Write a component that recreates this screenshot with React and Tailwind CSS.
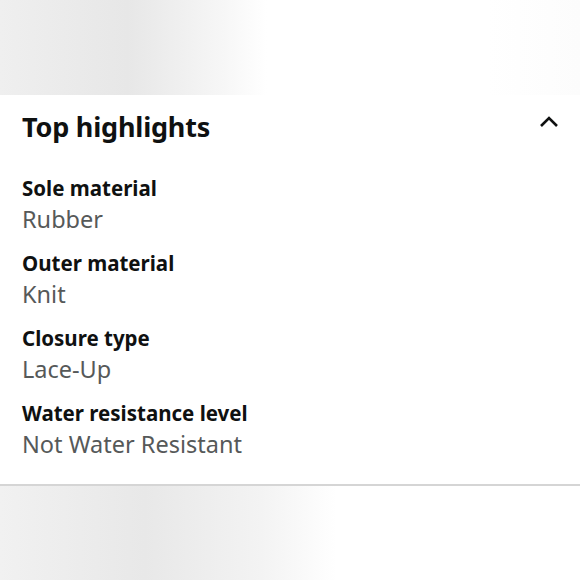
import React from 'react';

const highlights = [
  { label: 'Sole material', value: 'Rubber' },
  { label: 'Outer material', value: 'Knit' },
  { label: 'Closure type', value: 'Lace-Up' },
  { label: 'Water resistance level', value: 'Not Water Resistant' },
];

const App = () => {
  return (
    <div className="w-[580px] h-[580px] flex flex-col bg-white font-['Noto_Sans',sans-serif] overflow-hidden">
      {/* photo strip above */}
      <div className="h-[95px] shrink-0 bg-[linear-gradient(90deg,#efefef_0%,#e7e7e7_22%,#f6f6f6_38%,#ffffff_46%,#ffffff_84%,#fcfcfc_100%)]" />

      {/* highlights card */}
      <div className="h-[391px] shrink-0 px-[22px] pt-[14px] border-b-2 border-[#d5d5d5]">
        <div className="flex items-center justify-between">
          <h2 className="text-[27px] font-bold leading-[36px] text-[#0f1111] tracking-[-0.2px]">Top highlights</h2>
          <svg width="22" height="14" viewBox="0 0 22 14" className="mr-[-2px] mt-[-10px]">
            <path d="M3 11 L11 3 L19 11" fill="none" stroke="#0f1111" strokeWidth="2.6" />
          </svg>
        </div>
        <div className="mt-[29px] flex flex-col gap-[13px]">
          {highlights.map((h) => (
            <div key={h.label} className="flex flex-col">
              <span className="text-[20.5px] font-bold leading-[28px] text-[#0f1111]">{h.label}</span>
              <span className="text-[23.5px] leading-[34px] text-[#565959]">{h.value}</span>
            </div>
          ))}
        </div>
      </div>

      {/* photo strip below */}
      <div className="flex-1 bg-[linear-gradient(90deg,#f1f1f1_0%,#e8e8e8_25%,#f3f3f3_45%,#ffffff_58%,#ffffff_100%)]" />
    </div>
  );
};

export default App;
